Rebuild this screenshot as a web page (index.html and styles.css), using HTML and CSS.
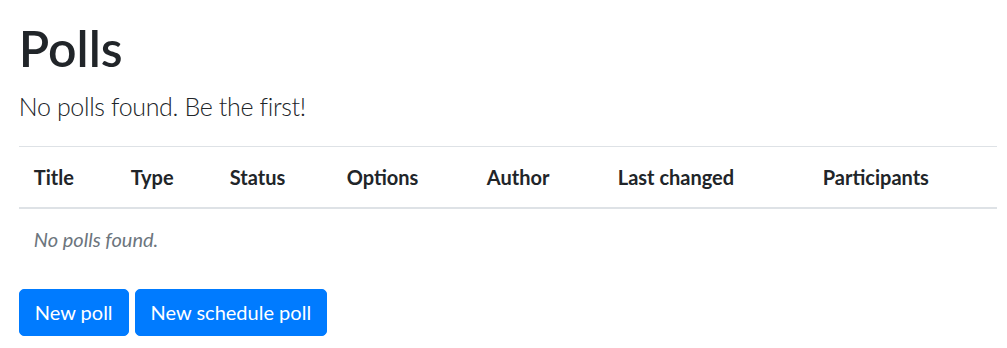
FILE: index.html
```html
<!DOCTYPE html>
<html lang="en">
<head>
<meta charset="utf-8">
<title>Polls</title>
<link rel="stylesheet" href="styles.css">
</head>
<body>
<main class="page">
  <h1 class="title">Polls</h1>
  <p class="lead">No polls found. Be the first!</p>
  <table class="polls">
    <colgroup>
      <col class="c-title"><col class="c-type"><col class="c-status"><col class="c-options"><col class="c-author"><col class="c-changed"><col class="c-part">
    </colgroup>
    <thead>
      <tr>
        <th>Title</th>
        <th>Type</th>
        <th>Status</th>
        <th>Options</th>
        <th>Author</th>
        <th>Last changed</th>
        <th>Participants</th>
      </tr>
    </thead>
    <tbody>
      <tr>
        <td colspan="7" class="empty">No polls found.</td>
      </tr>
    </tbody>
  </table>
  <div class="actions">
    <a class="btn" href="#">New poll</a>
    <a class="btn" href="#">New schedule poll</a>
  </div>
</main>
</body>
</html>
```

FILE: styles.css
```css
html, body {
  margin: 0;
  padding: 0;
  background: #fff;
}
body {
  font-family: "Lato", "Open Sans", "Liberation Sans", sans-serif;
  font-size: 20px;
  line-height: 1.5;
  color: #212529;
}
.page {
  padding: 18px 10px 0 18.75px;
}
.title {
  margin: 0 0 10px;
  font-size: 50px;
  font-weight: 600;
  line-height: 1.2;
}
.lead {
  margin: 0 0 20px;
  font-size: 25px;
  font-weight: 300;
  line-height: 1.5;
  letter-spacing: -0.35px;
}
.polls {
  width: 100%;
  border-collapse: collapse;
  table-layout: fixed;
  margin-bottom: 20px;
}
.c-title { width: 97px; }
.c-type { width: 99px; }
.c-status { width: 117px; }
.c-options { width: 140px; }
.c-author { width: 131px; }
.c-changed { width: 205px; }
.c-part { width: auto; }
.polls th {
  text-align: left;
  font-weight: 700;
  padding: 15px;
  border-top: 1.25px solid #dee2e6;
  border-bottom: 2.5px solid #dee2e6;
  vertical-align: bottom;
  white-space: nowrap;
}
.polls td {
  padding: 15px;
  border-top: 1.25px solid #dee2e6;
}
.empty {
  font-style: italic;
  color: #6c757d;
}
.actions {
  display: flex;
  gap: 6px;
}
.btn {
  display: inline-block;
  padding: 7.5px 15px;
  font-size: 20px;
  line-height: 1.5;
  color: #fff;
  background: #007bff;
  border: 1.25px solid #007bff;
  border-radius: 5px;
  text-decoration: none;
}
```
